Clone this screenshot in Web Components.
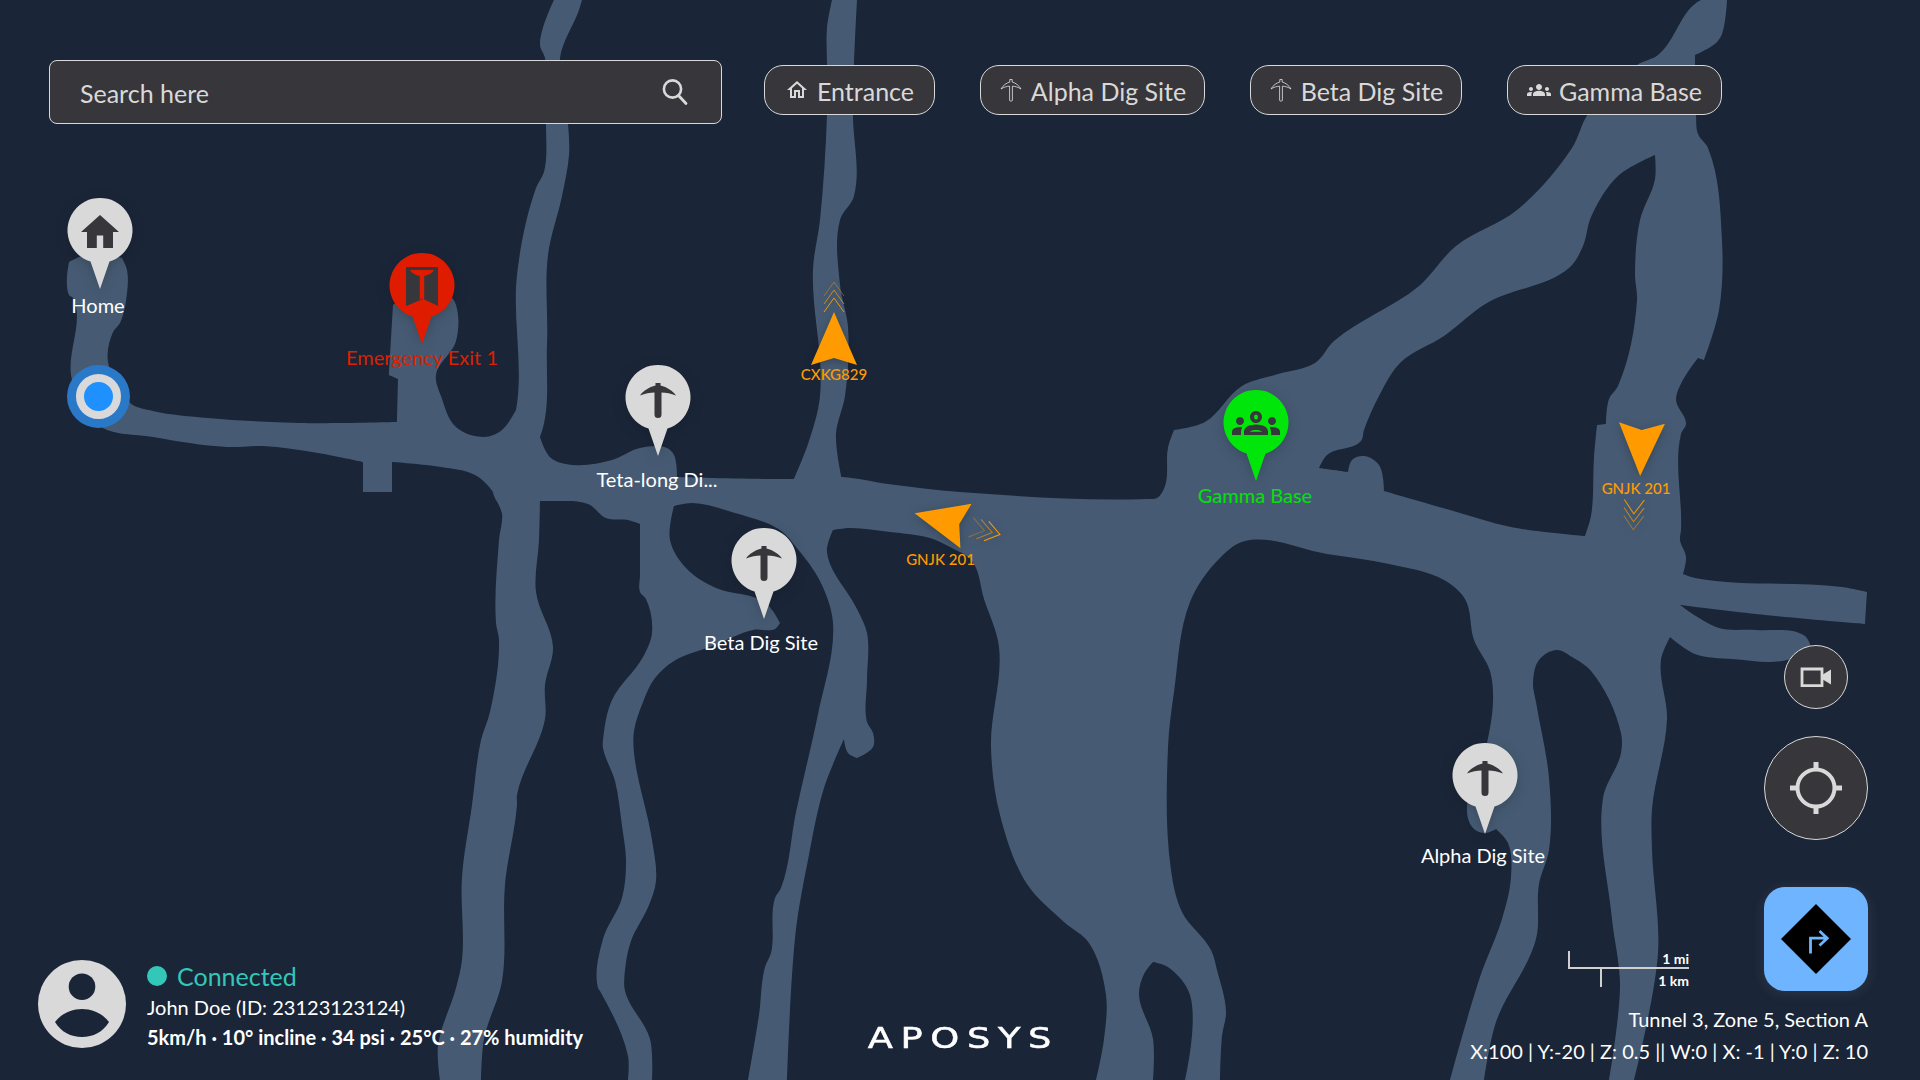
<!DOCTYPE html>
<html lang="en">
<head>
<meta charset="utf-8">
<title>Aposys tunnel map</title>
<style>
  html, body { margin: 0; background: #1a2537; }
  body { font-family: Lato, "Liberation Sans", sans-serif; }
</style>
</head>
<body>

<app-shell>
  <tunnel-map slot="map">
    <map-pin x="100" y="231" label-x="-2" label-y="74">
      <icon-glyph slot="icon" name="home" size="48" color="#37373b"></icon-glyph>
      Home
    </map-pin>
    <map-pin x="422" y="286" label-y="71" color="#e01c00" text="#dc2000">
      <icon-glyph slot="icon" name="exit" size="48" color="#37373b"></icon-glyph>
      Emergency Exit 1
    </map-pin>
    <map-pin x="658" y="398" label-y="81" label-x="-1">
      <icon-glyph slot="icon" name="pick" size="48" color="#37373b"></icon-glyph>
      Teta-long Di...
    </map-pin>
    <map-pin x="764" y="561" label-x="-3" label-y="81">
      <icon-glyph slot="icon" name="pick" size="48" color="#37373b"></icon-glyph>
      Beta Dig Site
    </map-pin>
    <map-pin x="1256" y="423" label-x="-1" label-y="72" color="#00e50a" text="#00e20a">
      <icon-glyph slot="icon" name="groups" size="48" color="#37373b"></icon-glyph>
      Gamma Base
    </map-pin>
    <map-pin x="1485" y="776" label-x="-2" label-y="79">
      <icon-glyph slot="icon" name="pick" size="48" color="#37373b"></icon-glyph>
      Alpha Dig Site
    </map-pin>

    <vehicle-marker x="834" y="365" turn="0" reach="67,75,83" shade=".9,.7,.4" label-x="0" label-y="9">CXKG829</vehicle-marker>
    <vehicle-marker x="965.5" y="526" turn="-76" reach="-19,-27,-35" shade=".35,.6,1" label-x="-25" label-y="33">GNJK 201</vehicle-marker>
    <vehicle-marker x="1642" y="422.5" turn="182" reach="91,99,107" shade=".9,.7,.45" shift="5" label-x="-6" label-y="65">GNJK 201</vehicle-marker>

    <position-dot x="98" y="396.5"></position-dot>
  </tunnel-map>

  <search-box slot="top">Search here</search-box>
  <place-chip slot="top" width="171"><icon-glyph slot="icon" name="home-line" size="24"></icon-glyph>Entrance</place-chip>
  <place-chip slot="top" width="225"><icon-glyph slot="icon" name="pick-line" size="24"></icon-glyph>Alpha Dig Site</place-chip>
  <place-chip slot="top" width="212"><icon-glyph slot="icon" name="pick-line" size="24"></icon-glyph>Beta Dig Site</place-chip>
  <place-chip slot="top" width="215"><icon-glyph slot="icon" name="groups" size="24"></icon-glyph>Gamma Base</place-chip>

  <status-panel slot="left" name="John Doe (ID: 23123123124)" stats="5km/h · 10° incline · 34 psi · 25°C · 27% humidity"></status-panel>
  <brand-logo slot="center">APOSYS</brand-logo>

  <scale-bar slot="scale"></scale-bar>
  <round-button slot="tools" size="64"><icon-glyph name="camera" size="48" color="#d9d9d9"></icon-glyph></round-button>
  <round-button slot="tools" size="104"><icon-glyph name="target" size="60" color="#d9d9d9"></icon-glyph></round-button>
  <nav-button slot="tools"></nav-button>
  <location-readout slot="readout">
    <div>Tunnel 3, Zone 5, Section A</div>
    <div>X:100 | Y:-20 | Z: 0.5 || W:0 | X: -1 | Y:0 | Z: 10</div>
  </location-readout>
</app-shell>

<script>
  const TUNNELS = {
    west: [69,262, 92,253, 122,258, 127,270, 127,293, 120,323, 113,332, 108,362, 130,403, 153,411, 208,418, 300,423, 397,422,
      398,379, 389,375, 393,305, 421,290, 450,296, 456,305, 456,341, 436,375, 441,396, 456,427, 484,437, 502,430, 516,410, 530,440, 540,500, 502,513,
      493,492, 475,475, 441,467, 392,462, 392,492, 363,492, 363,462, 318,453, 263,446, 227,447, 153,437, 98,425, 72,380, 73,298, 69,295],
    northA: [554,0, 582,0, 579,10, 560,58, 568,124, 569,155, 562,196, 548,255, 547,344, 540,437, 530,450, 505,440, 516,410,
      517,275, 536,188, 544,172, 546,124, 545,58, 540,45],
    northE: [793,481, 808,444, 820,396, 813,269, 820,220, 827,115, 827,65, 827,28, 832,0, 857,0, 854,64, 853,115, 854,196,
      840,220, 840,285, 848,327, 845,396, 836,434, 842,480],
    central: [540,437, 551,458, 573,465, 612,460, 640,448, 667,448, 674,455, 677,477, 793,479, 842,477, 888,484, 960,492, 1148,499, 1157,498,
      1165,486, 1168,448, 1174,430, 1205,422, 1242,386, 1278,374, 1315,363, 1334,341, 1419,286, 1456,246, 1517,210, 1572,148, 1588,114,
      1637,65, 1658,55, 1701,0, 1727,0, 1722,34, 1716,43, 1695,55, 1696,114, 1698,134, 1708,148, 1722,241, 1719,310, 1704,360, 1698,358,
      1676,399, 1686,424, 1681,434, 1681,530, 1680,540, 1686,557, 1683,574, 1695,578, 1842,587, 1867,592, 1865,624, 1756,614, 1680,605,
      1719,628, 1756,630, 1805,636, 1811,647, 1787,660, 1732,659, 1695,654, 1670,637, 1661,660, 1667,719, 1652,809, 1652,850, 1658,953,
      1634,1080, 1609,1080, 1620,984, 1612,919, 1603,798, 1621,753, 1621,733, 1591,671, 1572,657, 1557,650, 1539,660, 1533,683, 1536,702,
      1549,778, 1549,850, 1539,884, 1536,939, 1496,1022, 1484,1080, 1450,1080, 1480,977, 1502,919, 1511,877, 1508,843, 1496,829, 1485,833,
      1474,829, 1467,812, 1487,743, 1493,702, 1490,671, 1474,640, 1465,599, 1444,580, 1389,564, 1327,554, 1245,541, 1217,561, 1190,602,
      1174,692, 1168,747, 1171,870, 1182,912, 1211,950, 1217,970, 1226,1012, 1222,1036, 1220,1080, 1185,1080, 1190,995, 1168,967, 1153,962,
      1144,974, 1139,995, 1153,1039, 1153,1080, 1096,1080, 1104,1039, 1106,995, 1089,943, 1064,922, 1027,884, 1000,815, 991,747, 999,647,
      984,599, 972,561, 950,547, 930,538, 890,532, 850,528, 833,530, 827,552, 857,609, 867,633, 867,680, 867,722, 873,733, 873,747, 857,758, 848,753,
      844,739, 824,788, 808,860, 796,929, 787,1080, 748,1080, 759,1015, 765,967, 771,953, 775,898, 781,888, 796,812, 814,733, 817,719, 833,623,
      820,581, 796,547, 780,530, 735,513, 692,503, 674,506, 670,540, 686,568, 716,588, 756,598, 768,605, 780,623, 775,629, 753,630, 715,645,
      674,661, 655,678, 643,702, 634,731, 634,753, 652,840, 656,881, 649,905, 631,941, 625,970, 625,991, 650,1039, 652,1080, 628,1080, 628,1056,
      600,991, 598,988, 603,939, 622,898, 626,860, 622,826, 615,781, 603,748, 603,740, 612,700, 643,657, 652,633, 646,599, 640,592, 640,575, 640,540, 640,524,
      628,520, 606,518, 588,504, 551,501, 540,501, 539,540, 536,592, 553,647, 545,685, 545,719, 517,795, 517,805, 505,884, 502,981, 484,1039,
      481,1080, 440,1080, 438,1046, 456,988, 462,960, 462,877, 472,805, 481,740, 490,712, 499,640, 496,623, 499,540, 502,513, 493,492, 500,440],
    // the big dark island under the north-east arm
    island: [1655,155, 1655,179, 1640,220, 1635,275, 1637,300, 1618,386, 1609,399, 1606,424, 1597,425, 1594,458, 1591,516, 1585,536, 1511,527,
      1450,510, 1384,491, 1379,465, 1364,456, 1352,460, 1348,472, 1319,468, 1327,455, 1361,441, 1364,430, 1379,396, 1401,362, 1444,336,
      1487,303, 1569,268, 1583,246, 1591,217, 1618,176]
  }

  // keeps the corners sharp, rounds everything else
  function smoothPath (list) {
    let pts = []
    for (let i = 0; i < list.length; i += 2) pts.push([list[i], list[i + 1]])
    let n = pts.length
    let dirs = pts.map((p, i) => {
      let prev = pts[(i + n - 1) % n]
      let next = pts[(i + 1) % n]
      let ax = p[0] - prev[0]
      let ay = p[1] - prev[1]
      let bx = next[0] - p[0]
      let by = next[1] - p[1]
      let la = Math.hypot(ax, ay)
      let lb = Math.hypot(bx, by)
      if ((ax * bx + ay * by) / (la * lb) < 0.55) return [0, 0]
      let dx = ax / la + bx / lb
      let dy = ay / la + by / lb
      let l = Math.hypot(dx, dy)
      return [dx / l, dy / l]
    })
    let d = `M${pts[0][0]} ${pts[0][1]}`
    for (let i = 0; i < n; i++) {
      let a = pts[i]
      let b = pts[(i + 1) % n]
      let k = Math.hypot(b[0] - a[0], b[1] - a[1]) * 0.33
      let c1 = [a[0] + dirs[i][0] * k, a[1] + dirs[i][1] * k]
      let c2 = [b[0] - dirs[(i + 1) % n][0] * k, b[1] - dirs[(i + 1) % n][1] * k]
      d += `C${c1[0].toFixed(1)} ${c1[1].toFixed(1)} ${c2[0].toFixed(1)} ${c2[1].toFixed(1)} ${b[0]} ${b[1]}`
    }
    return d + 'Z'
  }

  const GROUPS = 'M12 12.75c1.63 0 3.07.39 4.24.9 1.08.48 1.76 1.56 1.76 2.73V18H6v-1.61c0-1.18.68-2.26 1.76-2.73 1.17-.52 2.61-.91 4.24-.91zM4 13c1.1 0 2-.9 2-2s-.9-2-2-2-2 .9-2 2 .9 2 2 2zm1.13 1.1c-.37-.06-.74-.1-1.13-.1-.99 0-1.93.21-2.78.58C.48 14.9 0 15.62 0 16.43V18h4.5v-1.61c0-.83.23-1.61.63-2.29zM20 13c1.1 0 2-.9 2-2s-.9-2-2-2-2 .9-2 2 .9 2 2 2zm4 3.43c0-.81-.48-1.53-1.22-1.85-.85-.37-1.79-.58-2.78-.58-.39 0-.76.04-1.13.1.4.68.63 1.46.63 2.29V18H24v-1.57zM12 6c1.66 0 3 1.34 3 3s-1.34 3-3 3-3-1.34-3-3 1.34-3 3-3z'

  const ICONS = {
    home: { box: '-24 -24 48 48', body: '<path fill="currentColor" d="M0-16 19 1H13V17H3.2V4.5H-3.2V17H-13V1H-19Z"/>' },
    exit: { box: '-24 -24 48 48', body: '<path fill="currentColor" d="M-16-19H16V20L12 18 1 13-11 18-16 20Z"/><path fill="#e01c00" d="M-12-16H12Q10-12 2.2-10V14L0 12.5-2.2 14V-10Q-10-12-12-16Z"/>' },
    pick: { box: '-24 -24 48 48', body: '<path fill="currentColor" d="M-2.5-15H2.5V-12.5C9-11 15-7 18-2.5 13-4.5 8-5.5 3.5-5.5V16.5A3.5 3.5 0 0 1-3.5 16.5V-5.5C-8-5.5-13-4.5-18-2.5-15-7-9-11-2.5-12.5Z"/>' },
    groups: { box: '0 0 24 24', body: `<path fill="currentColor" d="${GROUPS}"/><ellipse cx="12" cy="9" rx="1" ry="1.3" fill="var(--glyph-cut, none)"/><path d="M9 16.4c.6-1.2 5.4-1.2 6 0z" fill="var(--glyph-cut, none)"/>` },
    'home-line': { box: '0 0 24 24', body: '<path fill="currentColor" d="M12 5.69l5 4.5V18h-2v-6H9v6H7v-7.81l5-4.5M12 3L2 12h3v8h6v-6h2v6h6v-8h3L12 3z"/>' },
    'pick-line': { box: '0 0 24 24', body: '<path fill="none" stroke="currentColor" stroke-width="1" opacity=".85" d="M10.8 1.5H13.2V4C16.5 5 20 7.3 22 11 19 9 16 8.3 13.4 8.2V22.5Q12 24 10.6 22.5V8.2C8 8.3 5 9 2 11 4 7.3 7.5 5 10.8 4Z"/>' },
    camera: { box: '-24 -24 48 48', body: '<path fill="none" stroke="currentColor" stroke-width="2.8" d="M-14-8H6V8.6H-14Z"/><path fill="currentColor" d="M6-2 15-7.5V7.5L6 2Z"/>' },
    target: { box: '-30 -30 60 60', body: '<circle r="18.5" fill="none" stroke="currentColor" stroke-width="4"/><path stroke="currentColor" stroke-width="5" d="M0-26V-17M0 17V26M-26 0H-17M17 0H26"/>' },
    search: { box: '0 0 28 28', body: '<circle cx="11.5" cy="11" r="8.6" fill="none" stroke="currentColor" stroke-width="2.6"/><path stroke="currentColor" stroke-width="2.8" stroke-linecap="round" d="M17.5 17.5 25 25.5"/>' }
  }

  class IconGlyph extends HTMLElement {
    connectedCallback () {
      let icon = ICONS[this.getAttribute('name')]
      let size = this.getAttribute('size') || 24
      let color = this.getAttribute('color') || 'currentColor'
      let root = this.shadowRoot || this.attachShadow({ mode: 'open' })
      root.innerHTML = `
        <style>
          :host { display: inline-flex; width: ${size}px; height: ${size}px; color: ${color}; flex: none; }
          svg { width: 100%; height: 100%; overflow: visible; }
        </style>
        <svg viewBox="${icon.box}">${icon.body}</svg>`
    }
  }

  class TunnelMap extends HTMLElement {
    constructor () {
      super()
      let root = this.attachShadow({ mode: 'open' })
      let { west, northA, northE, central, island } = TUNNELS
      root.innerHTML = `
        <style>
          :host { display: block; position: relative; width: 1920px; height: 1080px; background: #1a2537; overflow: hidden; }
          svg { display: block; }
          path { fill: #465b73; }
        </style>
        <svg width="1920" height="1080" viewBox="0 0 1920 1080">
          <path d="${smoothPath(west)}"/>
          <path d="${smoothPath(northA)}"/>
          <path d="${smoothPath(northE)}"/>
          <path fill-rule="evenodd" d="${smoothPath(central)}${smoothPath(island)}"/>
        </svg>
        <slot></slot>`
    }
  }

  class MapPin extends HTMLElement {
    constructor () {
      super()
      let color = this.getAttribute('color') || '#d9d9d9'
      let text = this.getAttribute('text') || '#ffffff'
      let lx = this.getAttribute('label-x') || 0
      let ly = this.getAttribute('label-y') || 76
      this.attachShadow({ mode: 'open' }).innerHTML = `
        <style>
          :host {
            position: absolute; left: ${this.getAttribute('x')}px; top: ${this.getAttribute('y')}px;
            width: 0; height: 0; --glyph-cut: ${color};
          }
          svg { position: absolute; left: -34px; top: -34px; overflow: visible; filter: drop-shadow(0 3px 6px rgba(10, 18, 30, .25)); }
          .icon { position: absolute; left: -24px; top: -24px; width: 48px; height: 48px; }
          .label {
            position: absolute; left: ${lx}px; top: ${ly}px; transform: translate(-50%, -50%);
            white-space: nowrap; font: 400 20px/24px Lato, "Liberation Sans", sans-serif; color: ${text};
          }
        </style>
        <svg width="68" height="94" viewBox="-34 -34 68 94">
          <path fill="${color}" d="M-9.5 30.5A32.5 32.5 0 1 1 9.5 30.5L0 58Z"/>
        </svg>
        <div class="icon"><slot name="icon"></slot></div>
        <div class="label"><slot></slot></div>`
    }
  }

  class VehicleMarker extends HTMLElement {
    constructor () {
      super()
      let reach = this.getAttribute('reach').split(',').map(Number)
      let shade = this.getAttribute('shade').split(',')
      let shift = this.getAttribute('shift') || 0
      // a negative reach means the chevrons trail behind the arrow
      let chevrons = reach.map((d, i) => {
        let back = d > 0 ? 14 : -14
        return `<path d="M-10 ${-d + back}L0 ${-d}L10 ${-d + back}" opacity="${shade[i]}"/>`
      }).join('')
      this.attachShadow({ mode: 'open' }).innerHTML = `
        <style>
          :host {
            position: absolute; left: ${this.getAttribute('x')}px; top: ${this.getAttribute('y')}px;
            width: 0; height: 0;
          }
          svg { position: absolute; left: 0; top: 0; overflow: visible; filter: drop-shadow(0 2px 5px rgba(10, 18, 30, .3)); }
          .label {
            position: absolute; left: ${this.getAttribute('label-x')}px; top: ${this.getAttribute('label-y')}px;
            transform: translate(-50%, -50%); white-space: nowrap;
            font: 500 15px/18px Lato, "Liberation Sans", sans-serif; color: #ff9b00;
          }
        </style>
        <svg width="1" height="1">
          <g transform="rotate(${this.getAttribute('turn')})">
            <path fill="#ff9b00" d="M0-53 23 0 0-7-23 0Z"/>
            <g fill="none" stroke="#ff9b00" stroke-width="1" transform="translate(${shift} 0)">${chevrons}</g>
          </g>
        </svg>
        <div class="label"><slot></slot></div>`
    }
  }

  class PositionDot extends HTMLElement {
    constructor () {
      super()
      this.attachShadow({ mode: 'open' }).innerHTML = `
        <style>
          :host {
            position: absolute; left: ${this.getAttribute('x') - 31.5}px; top: ${this.getAttribute('y') - 31.5}px;
            width: 63px; height: 63px; box-sizing: border-box; display: grid; place-items: center;
            border-radius: 50%; background: #2a79c9;
          }
          .ring { width: 45px; height: 45px; box-sizing: border-box; border-radius: 50%; background: #1e90ff; border: 8px solid #d9d9d9; }
        </style>
        <div class="ring"></div>`
    }
  }

  class SearchBox extends HTMLElement {
    constructor () {
      super()
      this.attachShadow({ mode: 'open' }).innerHTML = `
        <style>
          :host {
            display: flex; align-items: center; justify-content: space-between; box-sizing: border-box;
            width: 673px; height: 64px; padding: 0 32px 0 30px; margin-right: -3px; border: 1px solid #d9d9d9; border-radius: 8px;
            background: #37373b; color: #d9d9d9; font: 400 25px Lato, "Liberation Sans", sans-serif; flex: none;
          }
          span { padding-top: 2px; }
        </style>
        <span><slot></slot></span>
        <icon-glyph name="search" size="28"></icon-glyph>`
    }
  }

  class PlaceChip extends HTMLElement {
    constructor () {
      super()
      this.attachShadow({ mode: 'open' }).innerHTML = `
        <style>
          :host {
            display: inline-flex; align-items: center; justify-content: center; gap: 8px; box-sizing: border-box;
            width: ${this.getAttribute('width')}px; height: 50px; margin-top: 5px;
            border: 1px solid #d9d9d9; border-radius: 19px; background: #37373b; color: #d9d9d9;
            font: 400 25px Lato, "Liberation Sans", sans-serif; flex: none; white-space: nowrap;
          }
          span { padding-top: 1px; }
        </style>
        <slot name="icon"></slot><span><slot></slot></span>`
    }
  }

  class RoundButton extends HTMLElement {
    constructor () {
      super()
      let size = this.getAttribute('size')
      this.attachShadow({ mode: 'open' }).innerHTML = `
        <style>
          :host {
            display: grid; place-items: center; box-sizing: border-box; width: ${size}px; height: ${size}px;
            border: 1px solid #d9d9d9; border-radius: 50%; background: #37373b;
          }
        </style>
        <slot></slot>`
    }
  }

  class NavButton extends HTMLElement {
    constructor () {
      super()
      this.attachShadow({ mode: 'open' }).innerHTML = `
        <style>
          :host {
            display: grid; place-items: center; width: 104px; height: 104px; border-radius: 21px;
            background: #6eb4ff; box-shadow: 0 2px 14px rgba(190, 200, 215, .12);
          }
        </style>
        <svg width="70" height="70" viewBox="-35 -35 70 70">
          <path d="M0-35 35 0 0 35-35 0Z" fill="#000"/>
          <path d="M-5.5 14.5V-.8H11M3.5-8 11.2-.8 3.5 6.5" fill="none" stroke="#6eb4ff" stroke-width="2.8"/>
        </svg>`
    }
  }

  class ScaleBar extends HTMLElement {
    constructor () {
      super()
      this.attachShadow({ mode: 'open' }).innerHTML = `
        <style>
          :host {
            display: grid; grid-template-rows: 17px 19px; width: 121px; box-sizing: border-box;
            font: 700 14px/16px Lato, "Liberation Sans", sans-serif; color: #ffffff; text-align: right;
          }
          .mi { border-left: 2px solid #d0d0d0; border-bottom: 2px solid #d0d0d0; box-sizing: content-box; height: 16px; margin-bottom: -2px; }
          .km { position: relative; padding-top: 5px; }
          .tick { display: block; width: 2px; height: 19px; background: #d0d0d0; margin: -5px 0 -14px 32px; }
        </style>
        <div class="mi">1 mi</div>
        <div class="km"><span class="tick"></span>1 km</div>`
    }
  }

  class StatusPanel extends HTMLElement {
    constructor () {
      super()
      this.attachShadow({ mode: 'open' }).innerHTML = `
        <style>
          :host { display: flex; gap: 21px; align-items: flex-start; color: #ffffff; font: 400 20px/28px Lato, "Liberation Sans", sans-serif; }
          svg { margin-top: 1px; flex: none; }
          .text { display: grid; }
          .state { display: flex; align-items: center; gap: 10px; color: #33c7b8; font-size: 25px; line-height: 34px; }
          .state i { width: 20px; height: 20px; border-radius: 50%; background: #33c7b8; }
          .stats { font-weight: 700; margin-top: 2px; }
        </style>
        <svg width="88" height="88" viewBox="0 0 88 88">
          <circle cx="44" cy="44" r="44" fill="#d9d9d9"/>
          <circle cx="44" cy="26.7" r="13.3" fill="#1a2537"/>
          <path d="M17 62C24 53 34 49 44 49S64 53 71 62C65 72 55 77 44 77S23 72 17 62Z" fill="#1a2537"/>
        </svg>
        <div class="text">
          <div class="state"><i></i>Connected</div>
          <div>${this.getAttribute('name')}</div>
          <div class="stats">${this.getAttribute('stats')}</div>
        </div>`
    }
  }

  class BrandLogo extends HTMLElement {
    constructor () {
      super()
      this.attachShadow({ mode: 'open' }).innerHTML = `
        <style>
          :host { display: block; color: #ffffff; }
          span {
            display: block; font: 400 29px/30px "DejaVu Sans", "Liberation Sans", sans-serif; letter-spacing: 6px;
            margin-right: -6px; transform: scaleX(1.27); transform-origin: center; white-space: nowrap;
            -webkit-text-stroke: .5px #ffffff;
          }
        </style>
        <span><slot></slot></span>`
    }
  }

  class LocationReadout extends HTMLElement {
    constructor () {
      super()
      this.attachShadow({ mode: 'open' }).innerHTML = `
        <style>
          :host { display: block; text-align: right; color: #ffffff; font: 400 20px/32px Lato, "Liberation Sans", sans-serif; white-space: nowrap; }
        </style>
        <slot></slot>`
    }
  }

  class AppShell extends HTMLElement {
    constructor () {
      super()
      this.attachShadow({ mode: 'open' }).innerHTML = `
        <style>
          :host { display: grid; width: 1920px; height: 1080px; overflow: hidden; }
          .layer { grid-area: 1 / 1; min-width: 0; min-height: 0; }
          .hud { display: flex; flex-direction: column; justify-content: space-between; z-index: 1; }
          .top { display: flex; align-items: flex-start; gap: 45px; padding: 60px 0 0 49px; }
          .bottom { display: grid; grid-template-columns: 1fr auto 1fr; align-items: end; padding: 0 52px 13px 52px; }
          .left { margin: 0 0 16px -14px; }
          .center { margin-bottom: 14px; }
          .right { display: flex; flex-direction: column; align-items: flex-end; gap: 12px; justify-self: end; }
          .row { display: flex; align-items: flex-end; gap: 75px; }
          .scale { margin-bottom: 4px; }
          .tools { display: flex; flex-direction: column; align-items: center; width: 104px; }
          ::slotted(round-button[size="64"]) { margin-bottom: 27px; }
          ::slotted(round-button[size="104"]) { margin-bottom: 47px; }
        </style>
        <div class="layer"><slot name="map"></slot></div>
        <div class="layer hud">
          <div class="top"><slot name="top"></slot></div>
          <div class="bottom">
            <div class="left"><slot name="left"></slot></div>
            <div class="center"><slot name="center"></slot></div>
            <div class="right">
              <div class="row">
                <div class="scale"><slot name="scale"></slot></div>
                <div class="tools"><slot name="tools"></slot></div>
              </div>
              <slot name="readout"></slot>
            </div>
          </div>
        </div>`
    }
  }

  window.customElements.define('icon-glyph', IconGlyph)
  window.customElements.define('tunnel-map', TunnelMap)
  window.customElements.define('map-pin', MapPin)
  window.customElements.define('vehicle-marker', VehicleMarker)
  window.customElements.define('position-dot', PositionDot)
  window.customElements.define('search-box', SearchBox)
  window.customElements.define('place-chip', PlaceChip)
  window.customElements.define('round-button', RoundButton)
  window.customElements.define('nav-button', NavButton)
  window.customElements.define('scale-bar', ScaleBar)
  window.customElements.define('status-panel', StatusPanel)
  window.customElements.define('brand-logo', BrandLogo)
  window.customElements.define('location-readout', LocationReadout)
  window.customElements.define('app-shell', AppShell)
</script>
</body>
</html>
